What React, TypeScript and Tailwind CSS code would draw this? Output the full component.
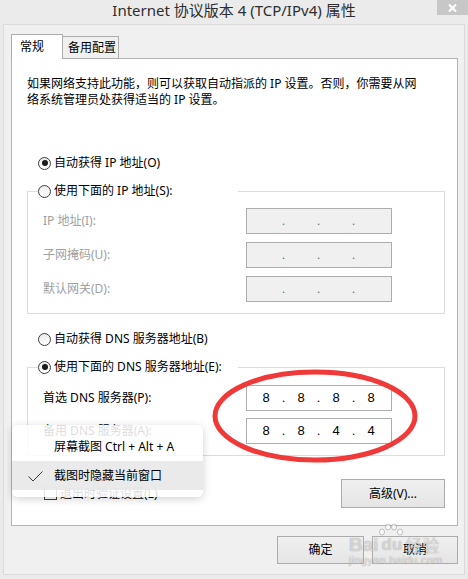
import React from 'react';

function Radio({ checked }: { checked?: boolean }) {
  return (
    <span className="flex h-[13px] w-[13px] shrink-0 items-center justify-center rounded-full border border-[#3c3c3c] bg-gradient-to-b from-[#ececec] to-white">
      {checked && <span className="h-[6px] w-[6px] rounded-full bg-[#1a1a1a]" />}
    </span>
  );
}

function IpBox({ values, disabled }: { values?: string[]; disabled?: boolean }) {
  const parts = values ?? ['', '', '', ''];
  return (
    <div
      className={`flex h-[26px] w-[146px] items-center pl-[4px] font-['Liberation_Sans',sans-serif] text-[13px] leading-[16px] ${
        disabled ? 'border border-[#adadad] bg-[#f0f0f0] text-[#6d6d6d]' : 'border border-[#abadb3] bg-white text-black'
      }`}
    >
      {parts.map((p, i) => (
        <React.Fragment key={i}>
          <span className="w-[30px] text-center">{p}</span>
          {i < 3 && <span className="w-[5px] text-center">.</span>}
        </React.Fragment>
      ))}
    </div>
  );
}

function Btn({ children, w, h }: { children: React.ReactNode; w: string; h: string }) {
  return (
    <div
      className={`flex ${w} ${h} items-center justify-center border border-[#acacac] bg-gradient-to-b from-[#f0f0f0] to-[#e5e5e5] text-black`}
    >
      {children}
    </div>
  );
}

export default function App() {
  return (
    <div className="relative h-[579px] w-[468px] overflow-hidden bg-[#ebebeb] font-['Noto_Sans','Noto_Sans_CJK_SC',sans-serif] text-[12px] text-black">
      {/* title bar */}
      <div className="relative h-[24px]">
        <div className="text-center text-[15px] leading-[20px] text-[#2e2e2e]">Internet 协议版本 4 (TCP/IPv4) 属性</div>
        <div className="absolute right-0 top-0 flex h-[15px] w-[31px] items-center justify-center bg-[#c7c7c7]">
          <svg width="9" height="8" viewBox="0 0 9 8">
            <path d="M1 0.5 L8 7.5 M8 0.5 L1 7.5" stroke="white" strokeWidth="2" />
          </svg>
        </div>
      </div>

      {/* window frame */}
      <div className="mx-[3px] h-[551px] border border-[#dadada] bg-[#f0f0f0] pt-[9px]">
        <div className="relative z-10 -mb-px ml-[7px] flex items-end">
          <div className="h-[25px] w-[52px] border border-b-0 border-[#adadad] bg-white pl-[8px] pt-[4px] leading-[16px]">常规</div>
          <div className="-ml-px h-[23px] w-[57px] border border-[#adadad] bg-[#f0f0f0] pl-[5px] pt-[3px] leading-[16px]">备用配置</div>
        </div>

        <div className="ml-[7px] h-[468px] w-[447px] border border-[#b4b4b4] bg-white">
          <p className="whitespace-nowrap pl-[15px] pt-[17px] leading-[16px]">
            如果网络支持此功能，则可以获取自动指派的 IP 设置。否则，你需要从网
            <br />
            络系统管理员处获得适当的 IP 设置。
          </p>

          <div className="ml-[26px] mt-[47px] flex h-[16px] items-center gap-[3px] leading-[16px]">
            <Radio checked />
            <span>自动获得 IP 地址(O)</span>
          </div>

          <fieldset className="ml-[15px] mt-[12px] w-[418px] border border-[#dcdcdc] pb-[11px] pl-[10px] pt-[9px]">
            <legend className="flex h-[16px] w-[200px] items-center gap-[3px] leading-[16px]">
              <Radio />
              <span>使用下面的 IP 地址(S):</span>
            </legend>
            <div className="grid grid-cols-[203px_146px] items-center gap-y-[8px] pl-[5px] text-[#a0a0a0]">
              <span>IP 地址(I):</span>
              <IpBox disabled />
              <span>子网掩码(U):</span>
              <IpBox disabled />
              <span>默认网关(D):</span>
              <IpBox disabled />
            </div>
          </fieldset>

          <div className="ml-[26px] mt-[17px] flex h-[16px] items-center gap-[3px] leading-[16px]">
            <Radio />
            <span>自动获得 DNS 服务器地址(B)</span>
          </div>

          <fieldset className="ml-[15px] mt-[12px] w-[418px] border border-[#dcdcdc] pb-[11px] pl-[10px] pt-[10px]">
            <legend className="flex h-[16px] w-[200px] items-center gap-[3px] leading-[16px]">
              <Radio checked />
              <span>使用下面的 DNS 服务器地址(E):</span>
            </legend>
            <div className="grid grid-cols-[203px_146px] items-center gap-y-[7px] pl-[5px]">
              <span>首选 DNS 服务器(P):</span>
              <IpBox values={['8', '8', '8', '8']} />
              <span>备用 DNS 服务器(A):</span>
              <IpBox values={['8', '8', '4', '4']} />
            </div>
          </fieldset>

          <div className="ml-[32px] mr-[12px] mt-[23px] flex items-center justify-between">
            <div className="flex items-center gap-[3px] leading-[16px]">
              <span className="h-[13px] w-[13px] border border-[#3c3c3c] bg-white" />
              <span>退出时验证设置(L)</span>
            </div>
            <Btn w="w-[104px]" h="h-[29px]">高级(V)...</Btn>
          </div>
        </div>

        <div className="mt-[10px] flex justify-end gap-[8px] pr-[6px]">
          <Btn w="w-[87px]" h="h-[28px]">确定</Btn>
          <Btn w="w-[86px]" h="h-[28px]">取消</Btn>
        </div>
      </div>

      {/* red annotation */}
      <svg className="absolute left-[205px] top-[362px]" width="220" height="110" viewBox="0 0 220 110">
        <ellipse cx="110" cy="54" rx="100" ry="44" fill="none" stroke="#f03a3a" strokeWidth="5" />
      </svg>

      {/* context menu */}
      <div className="absolute left-[12px] top-[425px] w-[191px] rounded-[6px] bg-white/[0.86] py-[7px] shadow-[0_2px_8px_rgba(0,0,0,0.18)]">
        <div className="flex h-[29px] items-center pl-[42px] leading-[16px]">屏幕截图 Ctrl + Alt + A</div>
        <div className="relative flex h-[29px] items-center bg-[#e6e6e6]/[0.85] pl-[42px] leading-[16px]">
          <svg className="absolute left-[16px] top-[10px]" width="15" height="11" viewBox="0 0 15 11">
            <path d="M0.5 5.5 L5 10 L14.5 0.5" fill="none" stroke="#3a3a3a" strokeWidth="1" />
          </svg>
          截图时隐藏当前窗口
        </div>
      </div>

      {/* watermark */}
      <div className="pointer-events-none absolute left-[349px] top-[521px] text-white/60 [text-shadow:0_0_1px_rgba(0,0,0,0.4)]">
        <svg className="absolute left-[29px] top-[2px]" width="26" height="14" viewBox="0 0 26 14">
          <g fill="rgba(255,255,255,0.6)" stroke="rgba(0,0,0,0.22)" strokeWidth="1">
            <ellipse cx="4" cy="9" rx="2.5" ry="3" />
            <ellipse cx="10" cy="4" rx="2.5" ry="3" />
            <ellipse cx="16" cy="4" rx="2.5" ry="3" />
            <ellipse cx="22" cy="9" rx="2.5" ry="3" />
          </g>
        </svg>
        <div className="flex items-end pt-[14px] font-['Liberation_Sans',sans-serif] text-[19px] font-bold leading-[19px]">
          <span>Bai</span>
          <span className="ml-[3px] text-[17px]">du</span>
          <span className="ml-[3px] font-['Noto_Sans_CJK_SC',sans-serif] text-[17px] font-normal">经验</span>
        </div>
        <div className="font-['Liberation_Sans',sans-serif] text-[11px] leading-[12px] tracking-[0.3px]">jingyan.baidu.com</div>
      </div>
    </div>
  );
}
